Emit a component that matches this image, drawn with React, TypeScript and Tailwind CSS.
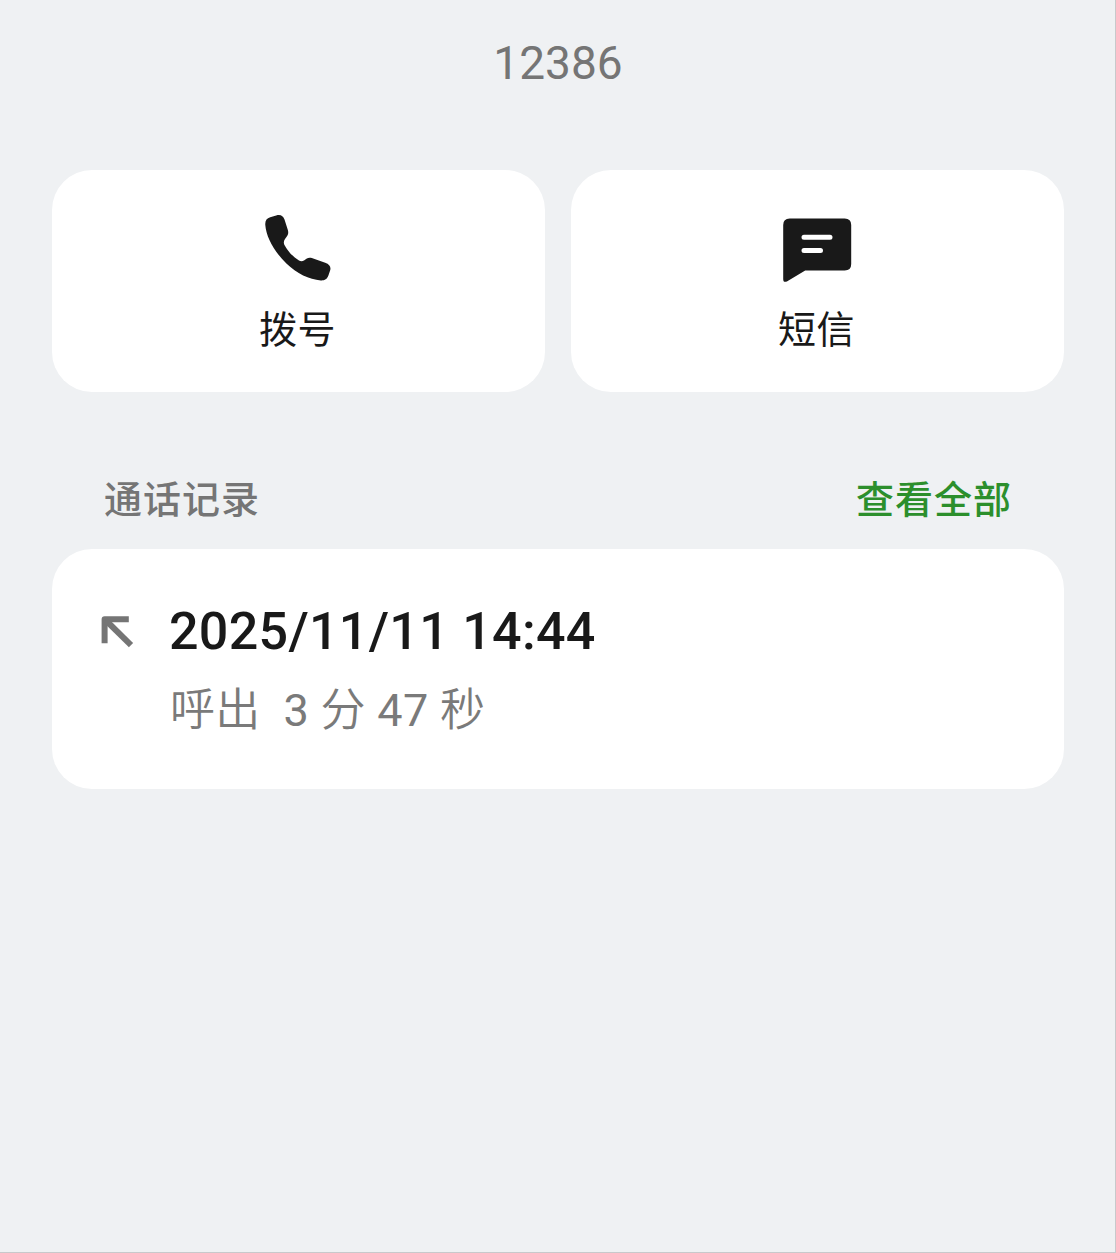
interface ActionCardProps {
  label: string
  children: React.ReactNode
}

function ActionCard({ label, children }: ActionCardProps) {
  return (
    <button className="flex h-[222px] flex-1 flex-col items-center rounded-[40px] bg-white pt-10 text-[#191919]">
      {children}
      <span className="mt-3 mr-[2px] text-[38px] leading-[56px] tracking-[0.5px]">{label}</span>
    </button>
  )
}

function PhoneIcon() {
  return (
    <svg width="80" height="80" viewBox="0.8 -0.2 80 80" fill="currentColor">
      <path d="M12 7.1L18 5.2C22.5 4 24.8 5.6 26.3 9.4L29.5 19.2C30.4 22.2 30.2 24 28.6 26.2L26.8 28.8C25.3 31 25.3 33 26.4 35C30 41.4 34.8 46.7 40.8 50.4C42.7 51.5 44.4 51.3 46.2 50L48.2 48.6C50 47.4 51.6 47.2 53.6 47.8L67 52.6C71.6 54.3 73 56.8 71.9 60.4L70.2 65.4C68.7 69.3 66.4 70.5 62.6 70.3C51 69.5 38.6 63.5 28.2 53.4C15.4 40.7 8 26.5 7.1 14.8C6.8 10.4 8.4 8.2 12 7.1Z" />
    </svg>
  )
}

function MessageIcon() {
  return (
    <svg width="80" height="80" viewBox="1.3 0 80 80" fill="currentColor">
      <path d="M13 8.5H68Q74.5 8.5 74.5 15V54Q74.5 60.5 68 60.5H28.5L10.2 71.4Q6.5 73 6.5 69V15Q6.5 8.5 13 8.5Z" />
      <path d="M27.3 27.3H53.3M27.3 40.4H43.8" fill="none" stroke="white" strokeWidth="5" strokeLinecap="round" />
    </svg>
  )
}

function OutgoingIcon() {
  return (
    <svg width="40" height="40" viewBox="0 0 40 40" fill="none" stroke="currentColor" strokeWidth="6">
      <path d="M7.6 32.2V8.2H31.8" strokeLinejoin="round" />
      <path d="M8.5 9L34 34.2" />
    </svg>
  )
}

export default function App() {
  return (
    <div className="h-[1253px] w-[1116px] border-r border-b border-[#c8c9cb] bg-[#eff1f3] pr-[51px] pl-[52px] font-[Roboto,'Noto_Sans_CJK_SC',sans-serif]">
      <h1 className="pt-9 text-center text-[46px] leading-[54px] font-normal text-[#757575]">12386</h1>

      {/* Quick actions */}
      <div className="mt-20 flex gap-[26px]">
        <ActionCard label="拨号">
          <PhoneIcon />
        </ActionCard>
        <ActionCard label="短信">
          <MessageIcon />
        </ActionCard>
      </div>

      {/* Call history */}
      <div className="mt-20 flex items-center justify-between px-[52px] text-[38px] leading-[56px] font-medium tracking-[1px]">
        <h2 className="text-[#757575]">通话记录</h2>
        <button className="text-[#2c8f2c]">查看全部</button>
      </div>
      <div className="mt-[21px] flex h-[240px] rounded-[40px] bg-white pt-[53px] pl-[45px]">
        <div className="mt-[9px] w-[72px] text-[#757575]">
          <OutgoingIcon />
        </div>
        <div>
          <p className="text-[52px] leading-[60px] font-medium tracking-[0.3px] text-[#191919]">2025/11/11 14:44</p>
          <p className="mt-4 pl-px text-[45px] leading-[66px] tracking-[0.3px] whitespace-pre text-[#7a7a7a]">
            <span className="font-[350]">呼出</span>  3 <span className="font-[350]">分</span> 47 <span className="font-[350]">秒</span>
          </p>
        </div>
      </div>
    </div>
  )
}
